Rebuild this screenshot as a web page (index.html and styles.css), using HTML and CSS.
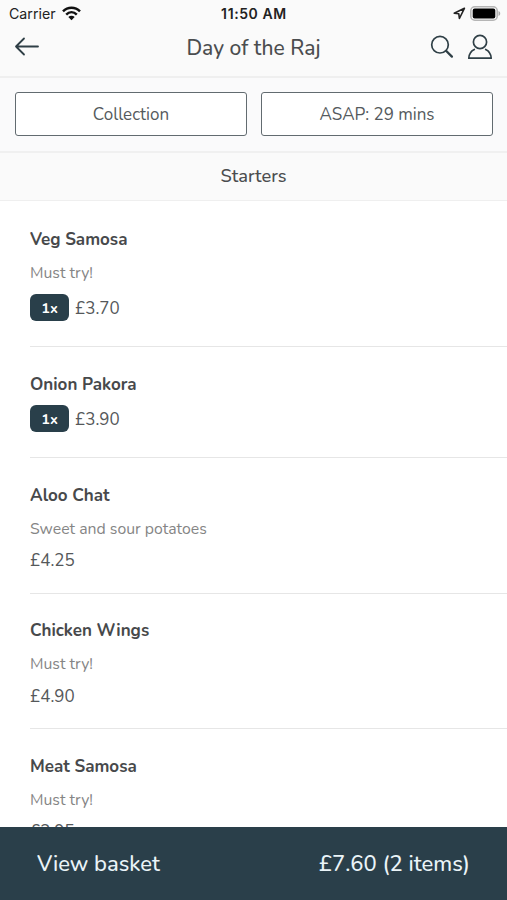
FILE: index.html
```html
<!DOCTYPE html>
<html lang="en">
<head>
<meta charset="utf-8">
<title>Day of the Raj</title>
<link rel="stylesheet" href="styles.css">
</head>
<body>
<div class="app">
  <div class="status">
    <div class="carrier"><span class="carrier-name">Carrier</span>
      <svg width="19" height="15" viewBox="0 0 19 15" fill="none" stroke="#111" stroke-width="2.5"><path d="M1 5.4C5.8.6 13.2.6 18 5.4M4.2 8.6c3.1-3 7.5-3 10.6 0"/><path d="M6.3 11c1.9-1.8 4.5-1.8 6.4 0l-3.2 3.2z" fill="#111" stroke="none"/></svg>
    </div>
    <div class="clock">11:50 AM</div>
    <div class="indicators">
      <svg width="13" height="13" viewBox="0 0 13 13" fill="none" stroke="#222" stroke-width="1.6" stroke-linejoin="round"><path d="M11.4 1.3 1.2 6.2l4.6.6.6 4.7z"/></svg>
      <svg width="31" height="16" viewBox="0 0 31 16"><rect x=".8" y=".8" width="26.4" height="13.4" rx="4" fill="#fafafa" stroke="#b5b5b5" stroke-width="1.6"/><rect x="2.7" y="2.6" width="22.6" height="9.8" rx="2" fill="#000"/><path d="M28.5 5v5c2.3-.7 2.3-4.3 0-5z" fill="#aaa"/></svg>
    </div>
  </div>
  <header class="nav">
    <svg class="back" width="26" height="20" viewBox="0 0 26 20" fill="none" stroke="#2f3f46" stroke-width="1.8" stroke-linecap="round" stroke-linejoin="round"><path d="M24 9.5H2M10 1.5l-8 8 8 8"/></svg>
    <h1 class="title">Day of the Raj</h1>
    <div class="actions">
      <svg width="24" height="26" viewBox="0 0 24 26" fill="none" stroke="#2f3f46" stroke-linecap="round"><circle cx="10" cy="10.7" r="8.3" stroke-width="1.7"/><path d="m16.3 17 5.6 5.6" stroke-width="2.3"/></svg>
      <svg width="26" height="26" viewBox="0 0 26 26" fill="none" stroke="#2f3f46" stroke-width="1.7" stroke-linecap="round" stroke-linejoin="round"><circle cx="13" cy="8" r="6.6"/><path d="M7.3 15.5C4.2 17 2 20.2 1.8 24.2h22.4c-.2-4-2.4-7.2-5.5-8.7"/></svg>
    </div>
  </header>
  <div class="options">
    <button class="option">Collection</button>
    <button class="option">ASAP: 29 mins</button>
  </div>
  <h2 class="section">Starters</h2>
  <main class="menu">
    <article class="item">
      <h3 class="name">Veg Samosa</h3>
      <p class="desc">Must try!</p>
      <div class="price ordered"><span class="qty">1x</span><span>£3.70</span></div>
    </article>
    <article class="item">
      <h3 class="name">Onion Pakora</h3>
      <div class="price ordered"><span class="qty">1x</span><span>£3.90</span></div>
    </article>
    <article class="item">
      <h3 class="name">Aloo Chat</h3>
      <p class="desc">Sweet and sour potatoes</p>
      <div class="price">£4.25</div>
    </article>
    <article class="item">
      <h3 class="name">Chicken Wings</h3>
      <p class="desc">Must try!</p>
      <div class="price">£4.90</div>
    </article>
    <article class="item">
      <h3 class="name">Meat Samosa</h3>
      <p class="desc">Must try!</p>
      <div class="price">£3.95</div>
    </article>
  </main>
  <footer class="basket"><span class="view">View basket</span><span class="total">£7.60 (2 items)</span></footer>
</div>
</body>
</html>
```
FILE: styles.css
```css
* { box-sizing: border-box; }
body { margin: 0; font-family: Nunito, "Noto Sans", sans-serif; color: #4b4d4f; background: #fff; }
h1, h2, h3, p { margin: 0; }
.app { height: 900px; display: flex; flex-direction: column; overflow: hidden; }
.status { flex: none; height: 27px; background: #fafafa; display: grid; grid-template-columns: 1fr auto 1fr; align-items: center; padding: 0 7px 0 9px; font-family: Inter, sans-serif; color: #222; }
.carrier { display: flex; align-items: center; gap: 6px; }
.carrier-name { font-size: 14.2px; }
.clock { font-weight: 600; font-size: 14px; letter-spacing: .6px; margin-right: 1px; }
.indicators { display: flex; justify-content: flex-end; align-items: center; gap: 4px; }
.indicators svg:last-child { margin-right: -1px; }
.nav { flex: none; height: 51px; background: #fafafa; border-bottom: 2px solid #efefef; display: grid; grid-template-columns: 1fr auto 1fr; align-items: center; padding: 0 14px 10px; }
.title { font-size: 21px; font-weight: 500; line-height: 28px; padding-top: 2px; }
.actions { display: flex; justify-content: flex-end; gap: 13px; }
.options { flex: none; height: 75px; background: #fafafb; border-bottom: 2px solid #f0f0f0; padding: 14px 14px 15px 15px; display: flex; gap: 14px; }
.option { flex: 1; height: 44px; padding: 2px 0 0; background: #fff; border: 1.5px solid #626b70; border-radius: 3px; font: 400 17px/24px Nunito, "Noto Sans", sans-serif; color: #555a5d; }
.section { flex: none; height: 48px; background: #fafafa; border-bottom: 1px solid #efefef; text-align: center; font-size: 18.2px; line-height: 46px; font-weight: 500; }
.menu { flex: 1; min-height: 0; overflow: hidden; padding: 1px 0 0 30px; }
.item { padding-top: 25.5px; border-bottom: 1.5px solid #e6e6e6; }
.name { font-size: 17px; line-height: 24px; font-weight: 700; color: #47494b; }
.desc { font-size: 15.8px; line-height: 20px; margin-top: 11px; color: #858585; }
.price { font-size: 17px; line-height: 26px; margin-top: 9.5px; padding-bottom: 18.5px; box-sizing: content-box; color: #55585a; }
.ordered { display: flex; align-items: center; gap: 6px; line-height: 27px; margin-top: 8.5px; padding-bottom: 25px; }
.ordered span:last-child { padding-top: 1px; margin-bottom: -1px; }
.desc + .ordered { margin-top: 11.5px; }
.qty { width: 39px; height: 27px; border-radius: 6px; background: #293f4a; color: #fff; font-size: 14.5px; line-height: 28px; font-weight: 700; text-align: center; }
.basket { flex: none; height: 73px; background: #2a3f4a; color: #eaf4f8; display: flex; justify-content: space-between; align-items: center; padding: 0 37px; font-size: 22px; font-weight: 500; }
```
